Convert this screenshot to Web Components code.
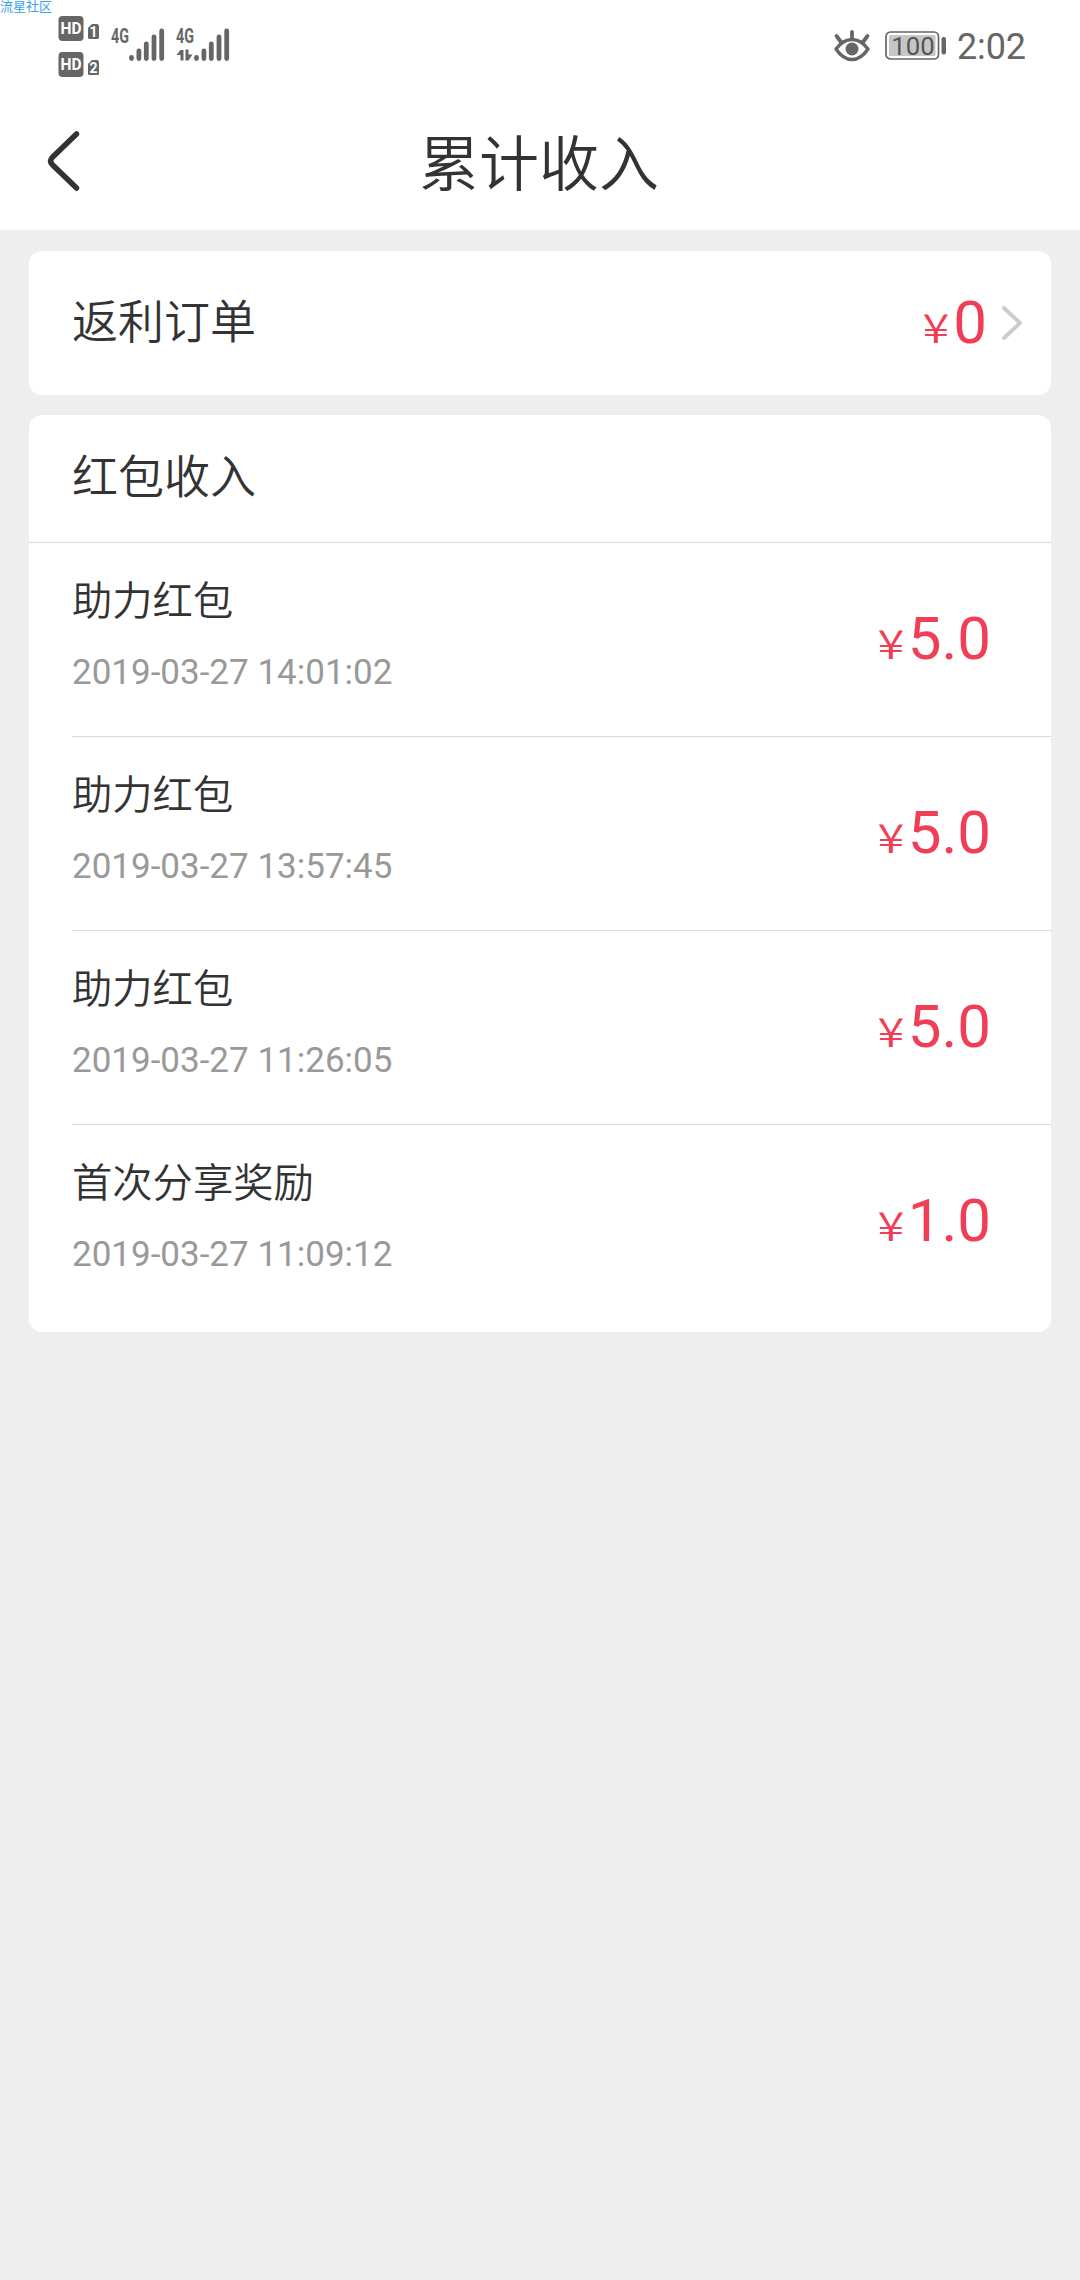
<!DOCTYPE html>
<html lang="zh-CN">
<head>
<meta charset="utf-8">
<title>累计收入</title>
<style>
  html, body { margin: 0; padding: 0; }
  body { width: 1080px; min-height: 2280px; background: #eee; color: #333; font-family: Roboto, "Noto Sans CJK SC", sans-serif; }
</style>
</head>
<body>
<income-page></income-page>
<script>
const define = (name, html) => customElements.define(name, class extends HTMLElement {
  constructor() {
    super();
    const t = document.createElement('template');
    t.innerHTML = html;
    this.attachShadow({ mode: 'open' }).append(t.content.cloneNode(true));
  }
});

const bars = `<g stroke="#666" stroke-width="4.8" stroke-linecap="round">
  <path d="M2.5 30.5V31.5M9.9 24V31.5M17.3 17V31.5M25 10V31.5M32.7 4V31.5"/></g>`;

const hd = n => `<svg width="42" height="25" viewBox="0 0 42 25"><rect x=".5" width="25" height="25" rx="4" fill="#666"/><text x="13" y="18.2" font-size="16.5" textLength="21" lengthAdjust="spacingAndGlyphs" text-anchor="middle">HD</text>
<path d="M34 8H39.5L41 9.5V21.5Q41 23 39.5 23H31.5Q30 23 30 21.5V12Z" fill="#666"/><text x="35.5" y="20.5" font-size="14" text-anchor="middle">${n}</text></svg>`;

define('status-hd', `
<style>:host{display:flex;flex-direction:column;gap:11px}svg{display:block}text{font-family:Roboto,sans-serif;font-weight:700;fill:#fff}</style>
${hd(1)}${hd(2)}`);

define('status-signal', `
<style>:host{display:block}svg{display:block}text{font-family:Roboto,sans-serif;font-weight:700;fill:#666}.arrows{display:none}:host([data]) .arrows{display:block}</style>
<svg width="54" height="44" viewBox="0 -8 54 44">
<text x="0" y="15.5" font-size="19.5" textLength="18" lengthAdjust="spacingAndGlyphs">4G</text>
<path class="arrows" fill="#666" d="M4.5 23H7.5V33.5H4.5V28H0.5ZM9.5 22.5H12.5V27.5H16.5L12.5 33.5H9.5Z"/>
<g transform="translate(18 0)">${bars}</g></svg>`);

define('status-bar', `
<style>
:host{display:flex;height:90px;box-sizing:border-box;padding:0 54px 0 58px;align-items:flex-start;justify-content:space-between;position:relative;color:#666}
.mark{position:absolute;left:0;top:0;font:13px/12px "Noto Sans CJK SC",sans-serif;color:#3c9fea;white-space:nowrap}
.left,.right{display:flex;align-items:flex-start}
.left{padding-top:16px}
status-signal{margin:3px 0 0 11px}
status-signal + status-signal{margin-left:11px}
.right{padding-top:27px}
svg{display:block}
.eye{margin-right:14px;margin-top:2px}.bat{margin-top:3px}
.time{font-size:36px;line-height:38px;margin-left:10px;margin-top:1px;letter-spacing:-.1px}
.bat text{font:26.5px Roboto,sans-serif;fill:#555}
</style>
<span class="mark">流星社区</span>
<div class="left"><status-hd></status-hd><status-signal></status-signal><status-signal data></status-signal></div>
<div class="right">
<svg class="eye" width="38" height="34" viewBox="0 0 38 34" fill="none" stroke="#666" stroke-linecap="round"><path d="M3 20Q10 10.5 19 10.5T35 20Q28 30.5 19 30.5T3 20Z" stroke-width="3.4" stroke-linejoin="round"/><circle cx="19" cy="20" r="6.5" fill="#666" stroke="none"/><path d="M19 3V9M3.5 7L8 13M34.5 7L30 13" stroke-width="3.8"/></svg>
<svg class="bat" width="62" height="31" viewBox="0 0 62 31"><rect x="1" y="2" width="52.5" height="27" rx="4.5" fill="#fff" stroke="#666" stroke-width="1.7"/><rect x="4" y="5" width="46.5" height="21" rx="1" fill="#c6c6c6"/><text x="28" y="25" text-anchor="middle" textLength="43.5" lengthAdjust="spacingAndGlyphs">100</text><rect x="56.5" y="7" width="4.5" height="17.5" rx="2" fill="#666"/></svg>
<span class="time">2:02</span></div>`);

define('nav-bar', `
<style>
:host{display:grid;grid-template-columns:100px 1fr 100px;height:140px;align-items:start}
svg{display:block;margin:39px 0 0 46px}
h1{margin:34px 2px 0 0;font-size:60px;line-height:84px;font-weight:350;text-align:center}
</style>
<svg width="36" height="64" viewBox="0 0 36 64" fill="none" stroke="#333" stroke-width="5.5" stroke-linecap="round"><path d="M30.5 5L6.2 28.5Q3 32 6.2 35.5L30.5 59"/></svg>
<h1><slot></slot></h1>`);

define('money-amount', `
<style>
:host{display:flex;align-items:baseline;color:#f03e56;line-height:70px}
.yen{font-size:40px;font-family:"Noto Sans CJK SC",sans-serif;font-weight:350;margin-right:6px;transform:scaleX(1.22)}
.num{font-size:60px}
</style>
<span class="yen">¥</span><span class="num"><slot></slot></span>`);

define('white-card', `<style>:host{display:block;background:#fff;border-radius:13px;overflow:hidden}</style><slot></slot>`);

define('order-row', `
<style>
:host{display:flex;height:144px;box-sizing:border-box;padding:0 28px 0 43px;justify-content:space-between;align-items:flex-start}
.label{font-size:46px;line-height:66px;margin-top:38px;font-weight:350}
.end{display:flex;align-items:flex-start;margin-top:37px}
svg{display:block;margin:17px 0 0 14px}
</style>
<span class="label"><slot></slot></span>
<div class="end"><money-amount><slot name="amount"></slot></money-amount>
<svg width="22" height="36" viewBox="0 0 22 36" fill="none" stroke="#ccc" stroke-width="4" stroke-linecap="round" stroke-linejoin="round"><path d="M3 3L19 18L3 33"/></svg></div>`);

define('section-title', `
<style>:host{display:block;height:128px;box-sizing:border-box;padding:29px 43px 0;border-bottom:1px solid #d9d9d9;font-size:46px;line-height:66px;font-weight:350}</style><slot></slot>`);

define('income-item', `
<style>
:host{display:flex;height:194px;box-sizing:border-box;margin-left:43px;padding-right:60px;justify-content:space-between;align-items:flex-start;border-bottom:1px solid #d9d9d9}
:host([last]){border-bottom-color:transparent;height:207px}
.name{font-size:40.3px;line-height:58px;margin-top:30px;font-weight:350}
.time{font-size:35px;line-height:42px;margin-top:21px;color:#999}
money-amount{margin-top:61px}
</style>
<div><div class="name"><slot></slot></div><div class="time"><slot name="time"></slot></div></div>
<money-amount><slot name="amount"></slot></money-amount>`);

define('income-page', `
<style>
:host{display:block}
header{background:#fff}
main{display:flex;flex-direction:column;gap:20px;padding:21px 29px}
</style>
<header><status-bar></status-bar><nav-bar>累计收入</nav-bar></header>
<main>
<white-card><order-row>返利订单<span slot="amount">0</span></order-row></white-card>
<white-card>
<section-title>红包收入</section-title>
<income-item>助力红包<span slot="time">2019-03-27 14:01:02</span><span slot="amount">5.0</span></income-item>
<income-item>助力红包<span slot="time">2019-03-27 13:57:45</span><span slot="amount">5.0</span></income-item>
<income-item>助力红包<span slot="time">2019-03-27 11:26:05</span><span slot="amount">5.0</span></income-item>
<income-item last>首次分享奖励<span slot="time">2019-03-27 11:09:12</span><span slot="amount">1.0</span></income-item>
</white-card>
</main>`);
</script>
</body>
</html>
